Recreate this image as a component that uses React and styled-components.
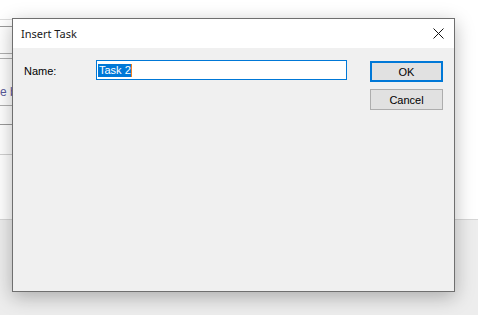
import React from "react";
import styled, { createGlobalStyle } from "styled-components";

const GlobalStyle = createGlobalStyle`
  html, body {
    margin: 0;
    padding: 0;
    width: 478px;
    height: 315px;
    overflow: hidden;
    background: #ededed;
    font-family: "Liberation Sans", Arial, sans-serif;
  }
`;

const Screen = styled.div`
  position: relative;
  width: 478px;
  height: 315px;
  display: flex;
  flex-direction: column;
`;

const BackPanel = styled.div`
  height: 220px;
  background: #ffffff;
  border-bottom: 1px solid #d6d6d6;
  box-sizing: border-box;
  padding-top: 19px;
`;

const BackRow = styled.div`
  width: 300px;
  height: ${(p) => p.h}px;
  border-top: 1px solid ${(p) => p.line};
  box-sizing: border-box;
  padding-top: ${(p) => p.pt || 0}px;
  display: flex;
  align-items: center;
  font-size: 12px;
  color: #5a5a9a;
  white-space: nowrap;
`;

const Dialog = styled.div`
  position: absolute;
  left: 12px;
  top: 18px;
  width: 443px;
  height: 274px;
  box-sizing: border-box;
  border: 1px solid #6f6f6f;
  background: #f0f0f0;
  box-shadow: 0 5px 18px rgba(0, 0, 0, 0.28);
  display: flex;
  flex-direction: column;
`;

const TitleBar = styled.div`
  height: 29px;
  background: #ffffff;
  display: flex;
  align-items: center;
  justify-content: space-between;
  padding: 0 10px 0 8px;
`;

const Title = styled.span`
  font-family: "Noto Sans", "Liberation Sans", sans-serif;
  font-size: 11px;
  color: #1a1a1a;
  padding-bottom: 1px;
`;

const CloseIcon = styled.svg`
  width: 11px;
  height: 11px;
  margin-bottom: 1px;
`;

const Body = styled.div`
  flex: 1;
  display: flex;
  align-items: flex-start;
  padding: 12px 11px 0 11px;
`;

const FieldRow = styled.div`
  display: flex;
  align-items: center;
`;

const Label = styled.label`
  width: 72px;
  font-size: 11px;
  color: #000;
  padding-top: 2px;
`;

const Field = styled.div`
  width: 251px;
  height: 20px;
  box-sizing: border-box;
  border: 1px solid #0078d7;
  background: #fff;
  display: flex;
  align-items: center;
  padding-left: 1px;
  font-size: 11px;
`;

const Selected = styled.span`
  background: #0078d7;
  color: #fff;
  height: 13px;
  line-height: 13px;
  padding: 0 0 0 1px;
  border-right: 1px solid #f08020;
`;

const Buttons = styled.div`
  margin-left: auto;
  margin-top: 1px;
  display: flex;
  flex-direction: column;
  gap: 7px;
`;

const Button = styled.button`
  width: 73px;
  height: 21px;
  box-sizing: border-box;
  background: #e1e1e1;
  border: ${(p) => (p.$default ? "2px solid #0078d7" : "1px solid #adadad")};
  font-family: "Liberation Sans", Arial, sans-serif;
  font-size: 11px;
  color: #000;
  padding: 0;
  display: flex;
  align-items: center;
  justify-content: center;
`;

const rows = [
  { h: 7, line: "#dcdcdc" },
  { h: 27, line: "#9a9a9a" },
  { h: 5, line: "#b0b0b0" },
  { h: 47, line: "#b0b0b0", text: "e by", pt: 20 },
  { h: 19, line: "#b0b0b0" },
  { h: 30, line: "#9a9a9a" },
  { h: 47, line: "#d0d0d0" },
];

export default function App() {
  return (
    <>
      <GlobalStyle />
      <Screen>
        <BackPanel>
          {rows.map((r, i) => (
            <BackRow key={i} h={r.h} line={r.line} pt={r.pt}>
              {r.text}
            </BackRow>
          ))}
        </BackPanel>
        <Dialog>
          <TitleBar>
            <Title>Insert Task</Title>
            <CloseIcon viewBox="0 0 11 11">
              <path d="M0.5 0.5 L10.5 10.5 M10.5 0.5 L0.5 10.5" stroke="#111" strokeWidth="1" fill="none" />
            </CloseIcon>
          </TitleBar>
          <Body>
            <FieldRow>
              <Label>Name:</Label>
              <Field>
                <Selected>Task 2</Selected>
              </Field>
            </FieldRow>
            <Buttons>
              <Button $default>OK</Button>
              <Button>Cancel</Button>
            </Buttons>
          </Body>
        </Dialog>
      </Screen>
    </>
  );
}
